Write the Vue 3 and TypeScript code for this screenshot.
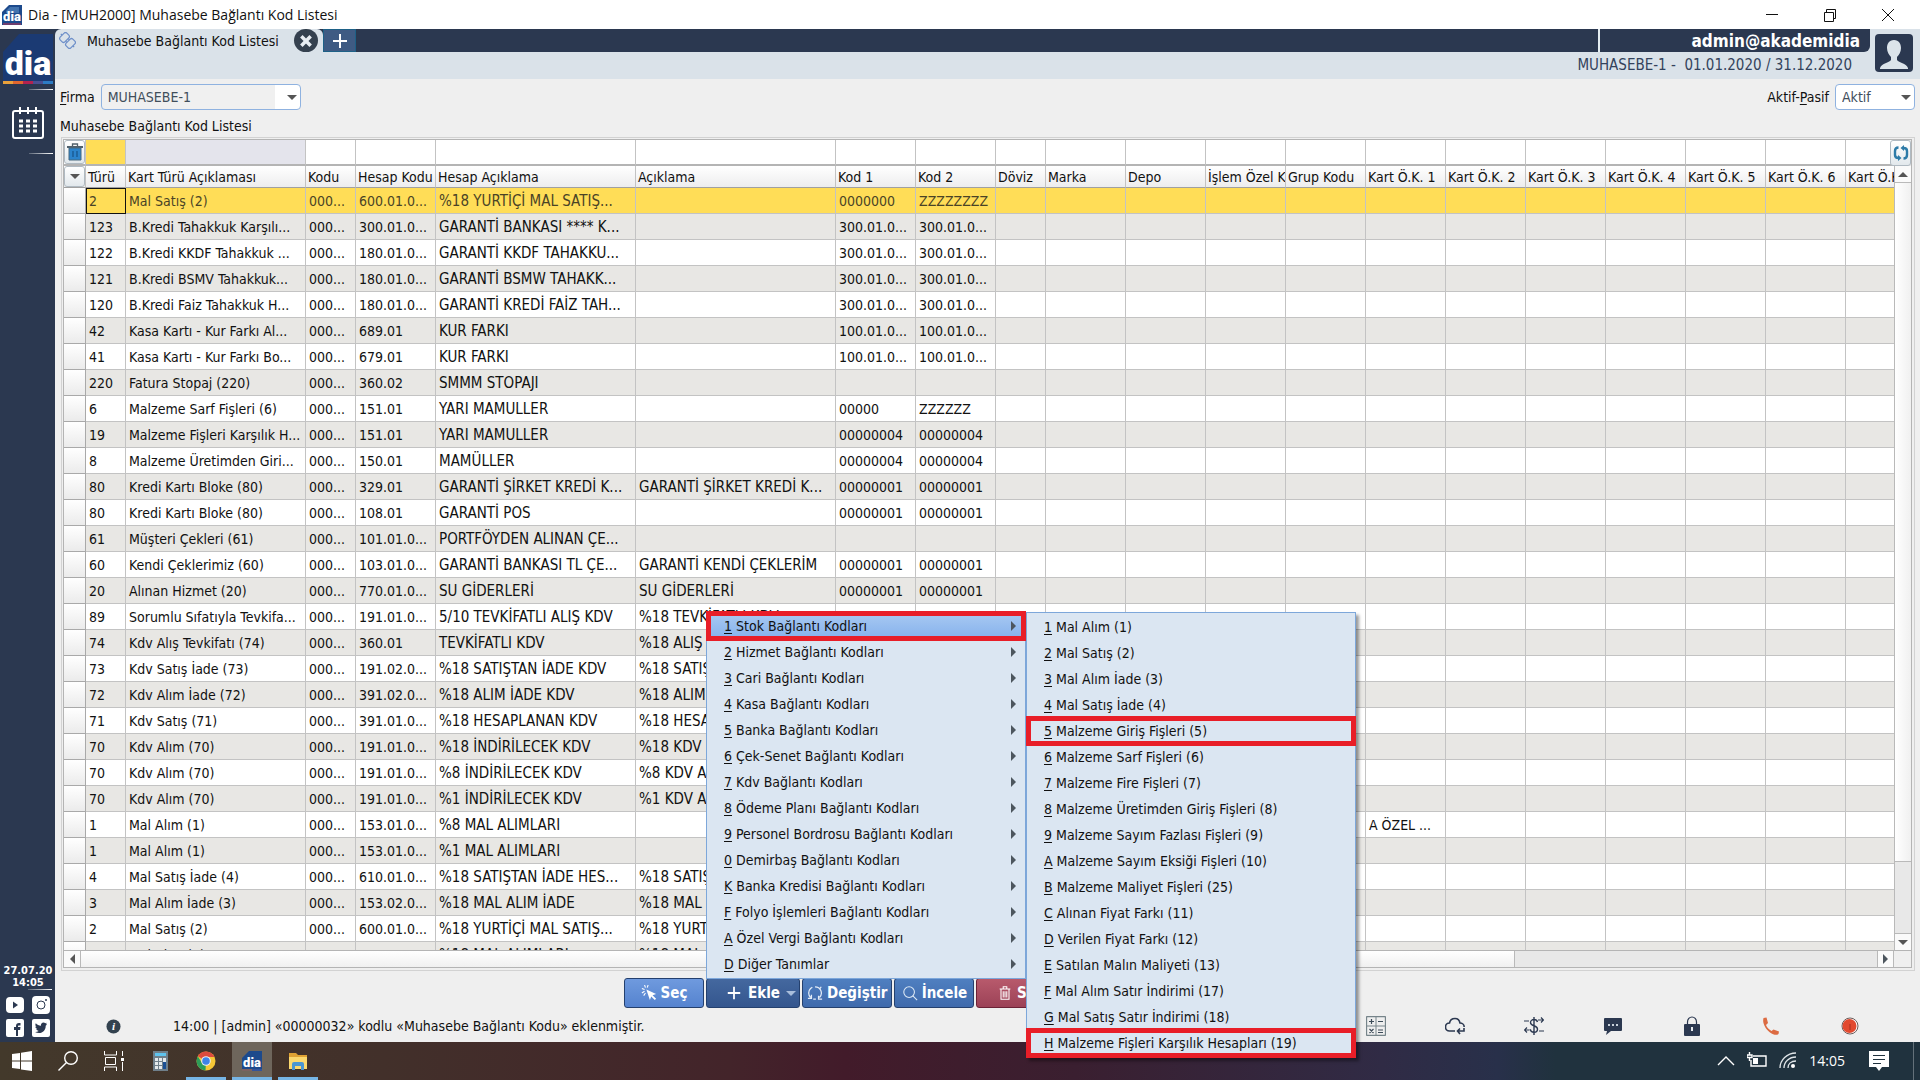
<script setup lang="ts">
import { ref } from 'vue'

interface Column {
  title: string
  width: number
}

interface MenuEntry {
  key: string
  label: string
  marked?: boolean
}

const columns: Column[] = [
  { title: 'Türü', width: 40 },
  { title: 'Kart Türü Açıklaması', width: 180 },
  { title: 'Kodu', width: 50 },
  { title: 'Hesap Kodu', width: 80 },
  { title: 'Hesap Açıklama', width: 200 },
  { title: 'Açıklama', width: 200 },
  { title: 'Kod 1', width: 80 },
  { title: 'Kod 2', width: 80 },
  { title: 'Döviz', width: 50 },
  { title: 'Marka', width: 80 },
  { title: 'Depo', width: 80 },
  { title: 'İşlem Özel Kod', width: 80 },
  { title: 'Grup Kodu', width: 80 },
  { title: 'Kart Ö.K. 1', width: 80 },
  { title: 'Kart Ö.K. 2', width: 80 },
  { title: 'Kart Ö.K. 3', width: 80 },
  { title: 'Kart Ö.K. 4', width: 80 },
  { title: 'Kart Ö.K. 5', width: 80 },
  { title: 'Kart Ö.K. 6', width: 80 },
  { title: 'Kart Ö.K. 7', width: 80 },
]

const records: string[][] = [
  ['2', 'Mal Satış (2)', '000...', '600.01.0...', '%18 YURTİÇİ MAL SATIŞ...', '', '0000000', 'ZZZZZZZZ'],
  ['123', 'B.Kredi Tahakkuk Karşılı...', '000...', '300.01.0...', 'GARANTİ BANKASI **** K...', '', '300.01.0...', '300.01.0...'],
  ['122', 'B.Kredi KKDF Tahakkuk ...', '000...', '180.01.0...', 'GARANTİ KKDF TAHAKKU...', '', '300.01.0...', '300.01.0...'],
  ['121', 'B.Kredi BSMV Tahakkuk...', '000...', '180.01.0...', 'GARANTİ BSMW TAHAKK...', '', '300.01.0...', '300.01.0...'],
  ['120', 'B.Kredi Faiz Tahakkuk H...', '000...', '180.01.0...', 'GARANTİ KREDİ FAİZ TAH...', '', '300.01.0...', '300.01.0...'],
  ['42', 'Kasa Kartı - Kur Farkı Al...', '000...', '689.01', 'KUR FARKI', '', '100.01.0...', '100.01.0...'],
  ['41', 'Kasa Kartı - Kur Farkı Bo...', '000...', '679.01', 'KUR FARKI', '', '100.01.0...', '100.01.0...'],
  ['220', 'Fatura Stopaj (220)', '000...', '360.02', 'SMMM STOPAJI'],
  ['6', 'Malzeme Sarf Fişleri (6)', '000...', '151.01', 'YARI MAMULLER', '', '00000', 'ZZZZZZ'],
  ['19', 'Malzeme Fişleri Karşılık H...', '000...', '151.01', 'YARI MAMULLER', '', '00000004', '00000004'],
  ['8', 'Malzeme Üretimden Giri...', '000...', '150.01', 'MAMÜLLER', '', '00000004', '00000004'],
  ['80', 'Kredi Kartı Bloke (80)', '000...', '329.01', 'GARANTİ ŞİRKET KREDİ K...', 'GARANTİ ŞİRKET KREDİ K...', '00000001', '00000001'],
  ['80', 'Kredi Kartı Bloke (80)', '000...', '108.01', 'GARANTİ POS', '', '00000001', '00000001'],
  ['61', 'Müşteri Çekleri (61)', '000...', '101.01.0...', 'PORTFÖYDEN ALINAN ÇE...'],
  ['60', 'Kendi Çeklerimiz (60)', '000...', '103.01.0...', 'GARANTİ BANKASI TL ÇE...', 'GARANTİ KENDİ ÇEKLERİM', '00000001', '00000001'],
  ['20', 'Alınan Hizmet (20)', '000...', '770.01.0...', 'SU GİDERLERİ', 'SU GİDERLERİ', '00000001', '00000001'],
  ['89', 'Sorumlu Sıfatıyla Tevkifa...', '000...', '191.01.0...', '5/10 TEVKİFATLI ALIŞ KDV', '%18 TEVKİFATLI KDV', '0000000', 'ZZZZZZZ'],
  ['74', 'Kdv Alış Tevkifatı (74)', '000...', '360.01', 'TEVKİFATLI KDV', '%18 ALIŞ'],
  ['73', 'Kdv Satış İade (73)', '000...', '191.02.0...', '%18 SATIŞTAN İADE KDV', '%18 SATIŞ'],
  ['72', 'Kdv Alım İade (72)', '000...', '391.02.0...', '%18 ALIM İADE KDV', '%18 ALIM'],
  ['71', 'Kdv Satış (71)', '000...', '391.01.0...', '%18 HESAPLANAN KDV', '%18 HESAP'],
  ['70', 'Kdv Alım (70)', '000...', '191.01.0...', '%18 İNDİRİLECEK KDV', '%18 KDV'],
  ['70', 'Kdv Alım (70)', '000...', '191.01.0...', '%8 İNDİRİLECEK KDV', '%8 KDV A'],
  ['70', 'Kdv Alım (70)', '000...', '191.01.0...', '%1 İNDİRİLECEK KDV', '%1 KDV A'],
  ['1', 'Mal Alım (1)', '000...', '153.01.0...', '%8 MAL ALIMLARI', '', '', '', '', '', '', '', '', 'A ÖZEL ...'],
  ['1', 'Mal Alım (1)', '000...', '153.01.0...', '%1 MAL ALIMLARI'],
  ['4', 'Mal Satış İade (4)', '000...', '610.01.0...', '%18 SATIŞTAN İADE HES...', '%18 SATIŞ'],
  ['3', 'Mal Alım İade (3)', '000...', '153.02.0...', '%18 MAL ALIM İADE', '%18 MAL'],
  ['2', 'Mal Satış (2)', '000...', '600.01.0...', '%18 YURTİÇİ MAL SATIŞ...', '%18 YURT'],
  ['1', 'Mal Alım (1)', '000...', '153.01.0...', '%18 MAL ALIMLARI', '%18 MAL'],
]

const linkGroups: MenuEntry[] = [
  { key: '1', label: 'Stok Bağlantı Kodları', marked: true },
  { key: '2', label: 'Hizmet Bağlantı Kodları' },
  { key: '3', label: 'Cari Bağlantı Kodları' },
  { key: '4', label: 'Kasa Bağlantı Kodları' },
  { key: '5', label: 'Banka Bağlantı Kodları' },
  { key: '6', label: 'Çek-Senet Bağlantı Kodları' },
  { key: '7', label: 'Kdv Bağlantı Kodları' },
  { key: '8', label: 'Ödeme Planı Bağlantı Kodları' },
  { key: '9', label: 'Personel Bordrosu Bağlantı Kodları' },
  { key: '0', label: 'Demirbaş Bağlantı Kodları' },
  { key: 'K', label: 'Banka Kredisi Bağlantı Kodları' },
  { key: 'F', label: 'Folyo İşlemleri Bağlantı Kodları' },
  { key: 'A', label: 'Özel Vergi Bağlantı Kodları' },
  { key: 'D', label: 'Diğer Tanımlar' },
]

const stockLinks: MenuEntry[] = [
  { key: '1', label: 'Mal Alım (1)' },
  { key: '2', label: 'Mal Satış (2)' },
  { key: '3', label: 'Mal Alım İade (3)' },
  { key: '4', label: 'Mal Satış İade (4)' },
  { key: '5', label: 'Malzeme Giriş Fişleri (5)', marked: true },
  { key: '6', label: 'Malzeme Sarf Fişleri (6)' },
  { key: '7', label: 'Malzeme Fire Fişleri (7)' },
  { key: '8', label: 'Malzeme Üretimden Giriş Fişleri (8)' },
  { key: '9', label: 'Malzeme Sayım Fazlası Fişleri (9)' },
  { key: 'A', label: 'Malzeme Sayım Eksiği Fişleri (10)' },
  { key: 'B', label: 'Malzeme Maliyet Fişleri (25)' },
  { key: 'C', label: 'Alınan Fiyat Farkı (11)' },
  { key: 'D', label: 'Verilen Fiyat Farkı (12)' },
  { key: 'E', label: 'Satılan Malın Maliyeti (13)' },
  { key: 'F', label: 'Mal Alım Satır İndirimi (17)' },
  { key: 'G', label: 'Mal Satış Satır İndirimi (18)' },
  { key: 'H', label: 'Malzeme Fişleri Karşılık Hesapları (19)', marked: true },
]

const selectedRow = ref(0)
const openGroup = ref('1')
const firm = ref('MUHASEBE-1')
const state = ref('Aktif')
</script>

<template>
  <div class="screen">
    <header class="titlebar">
      <svg class="app-icon" viewBox="0 0 20 20">
        <path d="M0 7 7 0h13v20H0z" fill="#1d4a8c" />
        <path d="M4 6 8 2h9v6H4z" fill="#5d8fc4" opacity=".6" />
        <text x="10" y="16" text-anchor="middle" class="logo-text" font-size="13">dia</text>
        <path d="M1 19h18" stroke="#c2314e" stroke-width="1" />
      </svg>
      <h1>Dia - [MUH2000] Muhasebe Bağlantı Kod Listesi</h1>
      <div class="window-controls">
        <button type="button" aria-label="Simge durumuna küçült">
          <svg viewBox="0 0 14 14"><path d="M1 6.500h12" /></svg>
        </button>
        <button type="button" aria-label="Önceki boyut">
          <svg viewBox="0 0 14 14"><path d="M1.500 4.500h9v9h-9zM3.500 4V1.500h9v9H11" /></svg>
        </button>
        <button type="button" aria-label="Kapat">
          <svg viewBox="0 0 14 14"><path d="m1 1 12 12M13 1 1 13" /></svg>
        </button>
      </div>
    </header>

    <div class="workspace">
      <aside class="sidebar">
        <svg class="brand" viewBox="0 0 50 50">
          <path d="M0 18 16 0h34v50H0z" fill="#1b3a73" />
          <text x="25" y="41" text-anchor="middle" class="logo-text" font-size="34">dia</text>
          <path d="M0 48.500h10" stroke="#e9a13b" stroke-width="3" />
          <path d="M10 48.500h10" stroke="#e0662f" stroke-width="3" />
          <path d="M20 48.500h10" stroke="#b3224f" stroke-width="3" />
          <path d="M30 48.500h10" stroke="#4a4f92" stroke-width="3" />
          <path d="M40 48.500h10" stroke="#2d7cc4" stroke-width="3" />
        </svg>
        <i class="rule"></i>
        <button type="button" class="calendar" aria-label="Takvim">
          <svg viewBox="0 0 32 32" fill="none" stroke="#fff" stroke-width="2">
            <rect x="1" y="4" width="30" height="27" rx="2" />
            <path d="M8 0v7M16 0v7M24 0v7" />
            <path d="M7 14h18M7 19h18M7 24h18" stroke-width="3" stroke-dasharray="4 3" />
          </svg>
        </button>
        <i class="rule"></i>
        <div class="clock">
          <span>27.07.20</span>
          <span>14:05</span>
          <i class="rule"></i>
        </div>
        <nav class="social" aria-label="Sosyal medya">
          <a href="#" aria-label="YouTube">
            <svg viewBox="0 0 18 18"><rect y="1" width="18" height="16" rx="4" fill="#fff" /><path d="M7 5.500v7l5-3.500z" fill="#2b3850" /></svg>
          </a>
          <a href="#" aria-label="Instagram">
            <svg viewBox="0 0 18 18"><rect width="18" height="18" rx="4" fill="#fff" /><circle cx="9" cy="9" r="4" fill="none" stroke="#2b3850" /><circle cx="14" cy="4" r="1" fill="#2b3850" /></svg>
          </a>
          <a href="#" aria-label="Facebook">
            <svg viewBox="0 0 18 18"><rect width="18" height="18" rx="2" fill="#fff" /><path d="M10 17v-6H8V8h2V7c0-2 1-3 3-3h1.500v2.500H13c-.7 0-1 .3-1 1V8h2.500l-.4 3H12v6z" fill="#2b3850" /></svg>
          </a>
          <a href="#" aria-label="Twitter">
            <svg viewBox="0 0 18 18"><rect width="18" height="18" rx="2" fill="#fff" /><path d="M15 5.500l-1.300 1.200c.2 4-2.700 7.300-6.700 7.300-1.500 0-2.800-.4-4-1.100 1.400.1 2.600-.3 3.600-1-1.100-.1-2-.8-2.300-1.800h1c-1.200-.4-2-1.300-2-2.500l1.100.3C3.400 7.100 3 5.500 3.800 4.300 5.100 5.800 6.900 6.700 9 6.800 8.600 5 9.900 3.500 11.500 3.500c.8 0 1.400.3 1.900.8l1.500-.5-.9 1.300z" fill="#2b3850" /></svg>
          </a>
        </nav>
      </aside>

      <main class="main">
        <div class="topbar">
          <div class="tabs">
            <div class="tab">
              <svg class="tab-icon" viewBox="0 0 18 18" fill="none" stroke="#6d8fc9" stroke-width="1.300">
                <g transform="rotate(45 9 9)">
                  <rect x="1" y="4" width="7" height="10" rx="2" /><rect x="10" y="4" width="7" height="10" rx="2" />
                  <path d="M-1 9h2M17 9h2M8 7h2M8 11h2" />
                </g>
              </svg>
              <span>Muhasebe Bağlantı Kod Listesi</span>
              <button type="button" class="tab-close" aria-label="Sekmeyi kapat">
                <svg viewBox="0 0 12 12"><path d="m2 2 8 8M10 2l-8 8" stroke="#e8edf2" stroke-width="3" /></svg>
              </button>
            </div>
            <button type="button" class="tab-add" aria-label="Yeni sekme">
              <svg viewBox="0 0 14 14"><path d="M7 0v14M0 7h14" stroke="#fff" stroke-width="2" /></svg>
            </button>
            <div class="filler"></div>
            <strong class="user">admin@akademidia</strong>
          </div>
          <div class="period">MUHASEBE-1 -&nbsp; 01.01.2020 / 31.12.2020</div>
          <svg class="avatar" viewBox="0 0 38 38">
            <rect width="38" height="38" rx="4" fill="#2b3850" />
            <path d="M19 6c5 0 7 4 7 8s-2 7-4 9v3c2 3 9 3 11 8v1H5v-1c2-5 9-5 11-8v-3c-2-2-4-5-4-9s2-8 7-8z" fill="#dce4ea" />
          </svg>
        </div>

        <div class="filters">
          <label for="firm"><u>F</u>irma</label>
          <div class="select firm">
            <select id="firm" v-model="firm"><option>MUHASEBE-1</option></select>
          </div>
          <div class="filler"></div>
          <label for="state">Aktif-<u>P</u>asif</label>
          <div class="select state">
            <select id="state" v-model="state"><option>Aktif</option><option>Pasif</option></select>
          </div>
        </div>

        <h2>Muhasebe Bağlantı Kod Listesi</h2>

        <section class="frame">
          <div class="grid">
            <div class="grid-body">
              <div class="viewport">
                <table>
                  <colgroup>
                    <col class="col-handle" />
                    <col v-for="column in columns" :key="column.title" :style="{ width: column.width + 'px' }" />
                  </colgroup>
                  <thead>
                    <tr class="filter-row">
                      <td class="tool-cell">
                        <button type="button" class="tool" aria-label="Filtreleri temizle">
                          <svg viewBox="0 0 16 18">
                            <path d="M5.500 3V1h5v2" fill="none" stroke="#51616c" stroke-width="1.300" />
                            <path d="M0 3h16v2H0z" fill="#51616c" />
                            <path d="M2 5h12v12H2z" fill="#2b83cc" stroke="#47697f" />
                            <path d="M6 8v6M10 8v6" stroke="#19568e" stroke-width="1.300" />
                          </svg>
                        </button>
                      </td>
                      <td v-for="column in columns" :key="column.title">
                        <input type="text" :aria-label="column.title + ' filtresi'" />
                      </td>
                    </tr>
                    <tr class="head-row">
                      <th class="tool-cell">
                        <button type="button" class="tool" aria-label="Sütun seçimi"><i class="arrow down"></i></button>
                      </th>
                      <th v-for="column in columns" :key="column.title" scope="col">{{ column.title }}</th>
                    </tr>
                  </thead>
                  <tbody>
                    <tr
                      v-for="(record, index) in records"
                      :key="index"
                      :class="{ selected: index === selectedRow }"
                      @click="selectedRow = index"
                    >
                      <td class="handle"></td>
                      <td
                        v-for="(column, cell) in columns"
                        :key="column.title"
                        :class="{ description: cell === 4 || cell === 5 }"
                      >{{ record[cell] }}</td>
                    </tr>
                  </tbody>
                </table>
              </div>
              <div class="vscroll">
                <button type="button" class="tool refresh" aria-label="Yenile">
                  <svg viewBox="0 0 16 16" fill="none" stroke="#2d7ba8" stroke-width="2.400">
                    <path d="M5.500 2.500C3 2.500 2 4 2 6v4c0 2 1 3 3.500 3M10.500 13.500c2.500 0 3.500-1.500 3.500-3.500V6c0-2-1-3-3.500-3" />
                    <path d="M11 0v6L7.500 3zM5 10v6l3.500-3z" fill="#2d7ba8" stroke="none" />
                  </svg>
                </button>
                <button type="button" class="step" aria-label="Yukarı"><i class="arrow up"></i></button>
                <div class="thumb"></div>
                <div class="track"></div>
                <button type="button" class="step last" aria-label="Aşağı"><i class="arrow down"></i></button>
              </div>
            </div>
            <div class="hscroll">
              <button type="button" class="step" aria-label="Sola"><i class="arrow left"></i></button>
              <div class="thumb"></div>
              <div class="track"></div>
              <button type="button" class="step last" aria-label="Sağa"><i class="arrow right"></i></button>
              <i class="corner"></i>
            </div>
          </div>
        </section>

        <div class="actions">
          <button type="button" class="action light wide">
            <svg viewBox="0 0 18 18"><path d="m6 5 11 5-4 1.500 4 4L15.500 17l-4-4L10 17z" fill="#fff" /><path d="M4 5 1 4M5 3 4 0M7 3l1-3M4 7 1 9M3 12l2-3" stroke="#fff" stroke-width="1.200" /></svg>
            <span>Seç</span>
          </button>
          <div class="add-wrap">
            <button type="button" class="action dark" aria-haspopup="menu" aria-expanded="true">
              <svg viewBox="0 0 18 18"><path d="M9 2v14M2 9h14" stroke="#fff" stroke-width="2" /></svg>
              <span>Ekle</span>
              <i class="arrow down pale"></i>
            </button>
            <ul class="menu" role="menu">
              <li v-for="entry in linkGroups" :key="entry.key" :class="{ marked: entry.marked }">
                <button
                  type="button"
                  role="menuitem"
                  :class="{ open: entry.key === openGroup }"
                  @click="openGroup = entry.key"
                >
                  <span><u>{{ entry.key }}</u> {{ entry.label }}</span>
                  <i class="arrow right"></i>
                </button>
              </li>
            </ul>
            <ul class="menu submenu" role="menu">
              <li v-for="entry in stockLinks" :key="entry.key" :class="{ marked: entry.marked }">
                <button type="button" role="menuitem"><span><u>{{ entry.key }}</u> {{ entry.label }}</span></button>
              </li>
            </ul>
          </div>
          <button type="button" class="action">
            <svg viewBox="0 0 18 18" fill="none" stroke="#e3ecf7" stroke-width="1.400">
              <path d="M4 14a7 7 0 0 1 0-10l2-1.500M9 2a7 7 0 0 1 5 12M1 15h4v-4M17 16h-4v-4M7 16h3M14 5l2-3" />
            </svg>
            <span>Değiştir</span>
          </button>
          <button type="button" class="action wide">
            <svg viewBox="0 0 18 18" fill="none" stroke="#dce8f5" stroke-width="1.200"><circle cx="8" cy="8" r="6" /><path d="m12 12 5 5" /></svg>
            <span>İncele</span>
          </button>
          <button type="button" class="action red wide">
            <svg viewBox="0 0 18 18" fill="none" stroke="#fff" stroke-width="1.200"><path d="M3 4.500h12M7 4V2h4v2M4.500 5v11h9V5M7 7v7M9 7v7M11 7v7" /></svg>
            <span>Sil</span>
          </button>
        </div>

        <footer class="status">
          <svg class="info" viewBox="0 0 16 16"><circle cx="8" cy="8" r="7.500" fill="#33424f" /><text x="8" y="12" text-anchor="middle" class="info-text">i</text></svg>
          <p>14:00 | [admin] «00000032» kodlu «Muhasebe Bağlantı Kodu» eklenmiştir.</p>
          <div class="filler"></div>
          <div class="status-icons">
            <button type="button" aria-label="Hesap makinesi">
              <svg viewBox="0 0 20 20" fill="none" stroke="#76848a"><rect x=".5" y=".5" width="19" height="19" rx="1" stroke-width="1.300" /><path d="M10 0v20M0 10h20" /><path d="M3 5.500h5M5.500 3v5M12 5.500h5M3.500 13l4 4M7.500 13l-4 4M12 14h5M12 16.500h5" stroke="#3c4b58" stroke-width="1.200" /></svg>
            </button>
            <button type="button" aria-label="Bulut">
              <svg viewBox="0 0 20 20" fill="none" stroke="#2b3850" stroke-width="1.600"><path d="M10 15H4.500a4 4 0 0 1 0-8C5 4 7.500 2.500 10 2.500s4.500 1.800 5 4.500c2 0 4.200 1.500 4.200 4" /><path d="M19 12v3h-6M15 12.500 12.500 15l2.500 3" /></svg>
            </button>
            <button type="button" aria-label="Döviz">
              <svg viewBox="0 0 20 20" fill="none" stroke="#2b3850" stroke-width="1.400"><path d="M13.500 6c-.5-2-2-2.500-3.500-2.500C8 3.500 6.500 5 6.500 6.500 6.500 10.500 13.500 9 13.500 13c0 2-1.700 3.300-3.500 3.300-2 0-3.500-1-3.700-3M10 1v18" /><path d="M0 5h5M14 4h5.500M17 1.500 19.500 4 17 6.500M5.500 14H.5M3 11.500.5 14 3 16.500M15 15h5" stroke-width="1.200" /></svg>
            </button>
            <button type="button" aria-label="Mesajlar">
              <svg viewBox="0 0 20 20"><path d="M2 2h16a1 1 0 0 1 1 1v11a1 1 0 0 1-1 1H8l-5 4 1-4H2a1 1 0 0 1-1-1V3a1 1 0 0 1 1-1z" fill="#2b3850" /><path d="M5 9h2M9 9h2M13 9h2" stroke="#c9d2dc" stroke-width="2" /></svg>
            </button>
            <button type="button" aria-label="Kilit">
              <svg viewBox="0 0 20 20"><path d="M5.500 8V6a4.500 5 0 0 1 9 0v2" fill="none" stroke="#2b3850" stroke-width="1.200" /><rect x="2" y="8" width="16" height="12" rx="1" fill="#2b3850" /><path d="M10 11v4" stroke="#e6ebf0" stroke-width="2" /></svg>
            </button>
            <button type="button" aria-label="Telefon">
              <svg viewBox="0 0 20 20"><path d="M2.500 2 5.500 1.500 7 7 5 9c1.200 2.800 3 4.600 5.500 6l2-1.500 5.500 2-.5 2.500c-2 1.500-5 1-8.500-1.500C4.500 13 1 7 2.500 2z" fill="#dc6b42" /></svg>
            </button>
            <button type="button" aria-label="Kayıt">
              <svg viewBox="0 0 20 20"><circle cx="10" cy="10" r="8" fill="#fff" stroke="#6a5a58" /><circle cx="9.500" cy="10" r="7" fill="#e2492f" /><path d="M10 8v6" stroke="#a82f20" /></svg>
            </button>
          </div>
        </footer>
      </main>
    </div>

    <div class="taskbar">
      <button type="button" class="task" aria-label="Başlat">
        <svg viewBox="0 0 20 20"><path d="m0 3 8-1.100v7.600H0zM9 1.700 20 0v9.500H9zM0 10.500h8v7.600L0 17zM9 10.500h11V20L9 18.400z" fill="#fff" /></svg>
      </button>
      <button type="button" class="task" aria-label="Ara">
        <svg viewBox="0 0 20 20" fill="none" stroke="#fff" stroke-width="1.400"><circle cx="13" cy="7" r="6.300" /><path d="M8.500 11.500.5 19.500" /></svg>
      </button>
      <button type="button" class="task" aria-label="Görev görünümü">
        <svg viewBox="0 0 20 20" fill="none" stroke="#fff"><path d="M.5 0v4h12V0M.5 20v-4h12v4M1.500 6.500h10v7h-10zM18.500 0v5M18.500 11v9" /><path d="M17 8.500h3" stroke-width="3" /></svg>
      </button>
      <button type="button" class="task" aria-label="Hesap Makinesi">
        <svg viewBox="0 0 20 20"><path d="M3 0h15v20H3z" fill="#6f7f8a" /><path d="M5 2h11v3H5z" fill="#5fc4ee" /><path d="M5 8.500h7M5 12.500h7M5 16.500h7" stroke="#e4e9ec" stroke-width="3" stroke-dasharray="3 1" /><path d="M13 7h3v4h-3z" fill="#e4e9ec" /><path d="M13 11h3v7h-3z" fill="#1a4f94" /></svg>
      </button>
      <button type="button" class="task running" aria-label="Chrome">
        <svg viewBox="0 0 20 20"><circle cx="10" cy="10" r="9.500" fill="#f6c736" /><path d="M10 10 1.800 5.200A9.500 9.500 0 0 1 18.500 6H10z" fill="#dd4b3e" /><path d="M10 10 9.500 19.500A9.500 9.500 0 0 1 1.800 5.200L6 12z" fill="#2d9d58" /><circle cx="10" cy="10" r="4.800" fill="#eef1f4" /><circle cx="10" cy="10" r="3.800" fill="#3f83e8" /></svg>
      </button>
      <button type="button" class="task running active" aria-label="Dia">
        <svg viewBox="0 0 20 20"><path d="M0 7 7 0h13v20H0z" fill="#1d4a8c" /><text x="10" y="16" text-anchor="middle" class="logo-text" font-size="13">dia</text><path d="M0 19h10" stroke="#dc7a35" /><path d="M10 19h10" stroke="#4c5fa8" /></svg>
      </button>
      <button type="button" class="task running" aria-label="Dosya Gezgini">
        <svg viewBox="0 0 20 20"><path d="M1 2h7l2 2h9v14H1z" fill="#dfa234" /><path d="M1 6h18v12H1z" fill="#fbd86e" /><path d="M4 19v-6a2 2 0 0 1 2-2h8a2 2 0 0 1 2 2v6h-3v-4H7v4z" fill="#4a96d2" /></svg>
      </button>
      <div class="filler"></div>
      <div class="tray">
        <svg viewBox="0 0 20 20" fill="none" stroke="#fff" stroke-width="1.400"><path d="m2 14 8-8 8 8" /></svg>
        <svg viewBox="0 0 20 20" fill="none" stroke="#fff" stroke-width="1.400"><path d="M6 5h13v10H4V9" /><path d="M6 7h5v6H6z" fill="#fff" stroke="none" /><path d="M2.500 1v3M0 4h5v2.500H0zM2.500 6v4" /></svg>
        <svg viewBox="0 0 20 20" fill="none" stroke="#dfe5e8" stroke-width="1.300"><path d="M2 17C2 9 9 2 18 2M6 17C6 11 11 6 18 6M10 17c0-4 3-7 8-7" /><circle cx="15" cy="15" r="2" fill="#fff" stroke="none" /></svg>
        <time>14:05</time>
        <svg class="notice" viewBox="0 0 20 20"><path d="M0 0h20v16h-7l-3 4-3-4H0z" fill="#fff" /><path d="M4 4.500h12M4 8.500h12M4 12.500h8" stroke="#20323e" stroke-width="1.200" /></svg>
      </div>
      <button type="button" class="show-desktop" aria-label="Masaüstünü göster"></button>
    </div>
  </div>
</template>

<style>
body {
  margin: 0;
  background: #efefef;
}
</style>

<style scoped>
.screen {
  display: flex;
  flex-direction: column;
  height: 100vh;
  overflow: hidden;
  color: #111;
  font: 14px/18px 'DejaVu Sans Condensed', 'Noto Sans', sans-serif;
}
.screen * {
  box-sizing: border-box;
}
button {
  padding: 0;
  border: 0;
  background: none;
  color: inherit;
  font: inherit;
}
svg {
  display: block;
  flex: none;
}
ul,
p,
h1,
h2 {
  margin: 0;
  padding: 0;
  font: inherit;
  list-style: none;
}
u {
  text-underline-offset: 2px;
}
.filler {
  flex: 1;
}
.logo-text {
  fill: #fff;
  font-family: Roboto, sans-serif;
  font-weight: 900;
}

/* Window title */
.titlebar {
  display: flex;
  align-items: center;
  height: 29px;
  padding-left: 2px;
  background: #fff;
}
.app-icon {
  width: 20px;
  height: 20px;
  margin-right: 6px;
}
.titlebar h1 {
  flex: 1;
  font: 14px/18px 'Open Sans', 'Noto Sans', sans-serif;
}
.window-controls button {
  width: 58px;
  height: 29px;
}
.window-controls svg {
  width: 14px;
  height: 14px;
  margin: 0 auto;
  fill: none;
  stroke: #111;
}
.window-controls {
  display: flex;
  padding-right: 3px;
}

/* Sidebar */
.workspace {
  display: flex;
  flex: 1;
  min-height: 0;
}
.sidebar {
  display: flex;
  flex-direction: column;
  align-items: center;
  width: 55px;
  padding: 5px 2px 5px 3px;
  background: #2b3850;
}
.brand {
  width: 50px;
  height: 50px;
}
.rule {
  align-self: flex-end;
  width: 24px;
  height: 1px;
  background: linear-gradient(90deg, #5d6879, #fff);
}
.sidebar > .rule {
  margin-top: 5px;
}
.calendar {
  width: 32px;
  margin: 17px 0 9px;
}
.clock {
  display: flex;
  flex-direction: column;
  margin-top: auto;
  color: #fff;
  font: bold 11px/12px 'DejaVu Sans Condensed', sans-serif;
  text-align: center;
}
.social {
  display: grid;
  grid-template-columns: 18px 18px;
  gap: 5px 8px;
  margin-top: 6px;
}

/* Top strip with tabs and account */
.main {
  display: flex;
  flex: 1;
  flex-direction: column;
  min-width: 0;
}
.topbar {
  position: relative;
  height: 50px;
  padding-right: 50px;
  background: #dae2e9;
}
.tabs {
  display: flex;
  height: 23px;
  overflow: hidden;
  border-radius: 0 0 6px 0;
  background: #2b3850;
}
.tab {
  display: flex;
  align-items: center;
  width: 268px;
  padding: 0 5px 0 4px;
  border-radius: 6px 6px 0 0;
  background: #dae2e9;
}
.tab span {
  flex: 1;
  margin-left: 11px;
}
.tab-icon {
  width: 17px;
}
.tab-close {
  display: flex;
  align-items: center;
  justify-content: center;
  width: 24px;
  height: 23px;
  border-radius: 12px;
  background: #35414f;
}
.tab-close svg {
  width: 14px;
}
.tab-add {
  display: flex;
  align-items: center;
  justify-content: center;
  width: 33px;
  border: 1px solid #1e6187;
  background: #3f5b83;
}
.tab-add svg {
  width: 14px;
}
.user {
  width: 272px;
  padding-right: 10px;
  border-left: 2px solid #e4edf1;
  color: #fff;
  font-size: 17px;
  line-height: 24px;
  text-align: right;
}
.period {
  padding-right: 18px;
  color: #33425c;
  font-size: 15px;
  line-height: 26px;
  text-align: right;
}
.avatar {
  position: absolute;
  top: 5px;
  right: 7px;
  width: 38px;
}

/* Filter bar */
.filters {
  display: flex;
  align-items: center;
  gap: 6px;
  padding: 5px 5px 0;
}
.select {
  position: relative;
  height: 26px;
}
.select.firm {
  width: 200px;
}
.select.state {
  width: 80px;
}
.select select {
  width: 100%;
  height: 26px;
  padding: 0 6px;
  border: 1px solid #8fb2e0;
  border-radius: 4px;
  appearance: none;
  background: #fff;
  color: #414e5b;
  font: inherit;
}
.select.firm select {
  background: linear-gradient(90deg, #f0f0f0 173px, #fff 173px);
}
.select::after {
  position: absolute;
  top: 11px;
  right: 4px;
  border: 5px solid transparent;
  border-top-color: #555;
  border-bottom: 0;
  content: '';
  pointer-events: none;
}
.main h2 {
  padding: 7px 5px 2px;
}

/* Data grid */
.frame {
  display: flex;
  flex: 1;
  min-height: 0;
  margin: 0 5px 7px 6px;
  padding: 1px 2px 2px 1px;
  border: 1px solid #d2d2d2;
}
.grid {
  display: flex;
  flex: 1;
  flex-direction: column;
  min-width: 0;
  border: 1px solid #b4b4b4;
}
.grid-body {
  display: flex;
  flex: 1;
  min-height: 0;
}
.viewport {
  flex: 1;
  overflow: hidden;
  background: #fff;
}
table {
  width: 1862px;
  border-spacing: 0;
  table-layout: fixed;
}
.col-handle {
  width: 22px;
}
td,
th {
  overflow: hidden;
  padding: 0 0 0 3px;
  border-right: 1px solid #c3c3c3;
  font-weight: normal;
  text-align: left;
  white-space: nowrap;
}
tbody td {
  height: 26px;
  border-bottom: 1px solid #c3c3c3;
}
tbody .description {
  font-size: 15px;
}
tbody tr:nth-child(even) {
  background: #e8e7e4;
}
tbody tr.selected {
  background: #ffdd57;
  color: #4a4326;
}
tbody .handle {
  border-color: #a9a9a9;
  background: linear-gradient(#fff, #ebebeb);
}
.selected td:nth-child(2) {
  outline: 1px solid #111;
  outline-offset: -1px;
}
.filter-row td {
  height: 26px;
  padding: 0;
  border-bottom: 2px solid #b4b4b4;
}
.filter-row input {
  display: block;
  width: 100%;
  height: 24px;
  padding: 0 3px;
  border: 0;
  background: #fff;
  font: inherit;
}
.filter-row td:nth-child(2) input {
  background: #ffdd57;
}
.filter-row td:nth-child(3) input {
  background: #e4e4ec;
}
.head-row th {
  height: 22px;
  padding-left: 2px;
  border-bottom: 1px solid #a0a0a0;
  background: linear-gradient(#fff, #ededee);
}
.head-row .tool-cell,
.filter-row .tool-cell {
  padding: 0;
}
.tool {
  display: flex;
  align-items: center;
  justify-content: center;
  width: 100%;
  height: 24px;
  border: 1px solid #b0bac2;
  border-radius: 3px;
  background: linear-gradient(#fff, #e2e8ec);
}
.tool svg {
  width: 16px;
}
.head-row .tool {
  height: 21px;
}

/* Small triangles on buttons, menus and scroll bars */
.arrow {
  border: 5px solid transparent;
}
.arrow.down {
  border-top-color: #555;
  border-bottom: 0;
}
.arrow.up {
  border-top: 0;
  border-bottom-color: #555;
}
.arrow.left {
  border-right-color: #555;
  border-left: 0;
}
.arrow.right {
  border-right: 0;
  border-left-color: #4d565e;
}
.arrow.pale {
  border-top-color: #a9bedb;
}

/* Scroll bars */
.vscroll {
  display: flex;
  flex-direction: column;
  align-items: flex-end;
  width: 17px;
  background: #e8e8e8;
}
.vscroll > * {
  width: 17px;
  border-left: 1px solid #b9b9b9;
}
.vscroll .refresh {
  position: relative;
  width: 21px;
  height: 26px;
  border: 1px solid #b0bac2;
}
.step {
  display: flex;
  flex: none;
  align-items: center;
  justify-content: center;
  width: 17px;
  height: 17px;
  background: #fafafa;
}
.vscroll .step {
  border-bottom: 1px solid #b9b9b9;
}
.vscroll .step.last {
  border-top: 1px solid #b9b9b9;
  border-bottom: 0;
}
.vscroll .thumb {
  flex: 680;
  border-bottom: 1px solid #b9b9b9;
  background: linear-gradient(90deg, #fff, #f0f0f0);
}
.vscroll .track {
  flex: 71;
}
.hscroll {
  display: flex;
  height: 17px;
  border-top: 1px solid #b4b4b4;
  background: #e8e8e8;
}
.hscroll .step {
  height: 16px;
  border-right: 1px solid #b9b9b9;
}
.hscroll .thumb {
  flex: 1433;
  border-right: 1px solid #b9b9b9;
  background: linear-gradient(#fff, #f0f0f0);
}
.hscroll .track {
  flex: 362;
}
.hscroll .step.last {
  border-left: 1px solid #b9b9b9;
}
.corner {
  width: 17px;
  background: #efefef;
}

/* Action buttons */
.actions {
  display: flex;
  gap: 2px;
  padding-left: 569px;
}
.action {
  display: flex;
  align-items: center;
  justify-content: center;
  gap: 4px;
  height: 30px;
  padding: 0 4px;
  border: 1px solid #24406e;
  border-radius: 3px;
  background: linear-gradient(#4f7fc0, #3f6aac);
  color: #fff;
  font-size: 15px;
  font-weight: bold;
}
.action svg {
  width: 16px;
}
.action.wide {
  width: 80px;
}
.action.light {
  background: linear-gradient(#6f9ade, #5583cf);
}
.action.dark {
  gap: 6px;
  width: 94px;
  padding-left: 20px;
  background: linear-gradient(#44689f, #34568e);
}
.action.red {
  border-color: #6c2236;
  background: linear-gradient(#b85a6c, #9c4257);
}
.add-wrap {
  position: relative;
}

/* Drop-down menus */
.menu {
  position: absolute;
  bottom: 29px;
  left: 0;
  z-index: 5;
  width: 320px;
  padding: 1px;
  border: 1px solid #7da7da;
  background: #dbe6f2;
}
.submenu {
  bottom: -50px;
  left: 320px;
  width: 330px;
  box-shadow: 3px 3px 3px #0006;
}
.menu li {
  position: relative;
}
.menu li.marked::after {
  position: absolute;
  inset: -2px;
  z-index: 1;
  border: 5px solid #e81e28;
  content: '';
  pointer-events: none;
}
.menu button {
  display: flex;
  align-items: center;
  justify-content: space-between;
  width: 100%;
  height: 26px;
  padding: 0 8px 0 16px;
}
.menu button.open {
  background: linear-gradient(#a8c9f2, #85b1ec);
}

/* Status line */
.status {
  display: flex;
  align-items: center;
  height: 34px;
  padding: 2px 31px 0 51px;
}
.info {
  width: 15px;
}
.info-text {
  fill: #fff;
  font: italic bold 12px 'Liberation Serif', serif;
}
.status p {
  margin-left: 52px;
}
.status-icons {
  display: flex;
}
.status-icons button {
  width: 79px;
}
.status-icons svg {
  width: 20px;
  margin: 0 auto;
}

/* Desktop taskbar */
.taskbar {
  display: flex;
  gap: 6px;
  height: 38px;
  padding-left: 2px;
  background: linear-gradient(90deg, #43392b 0%, #42302a 20%, #43242a 38%, #421b2a 44%, #3a1f30 56%, #302b45 72%, #28304a 78%, #20323e 81%);
}
.task {
  width: 40px;
}
.task svg {
  width: 20px;
  margin: 0 auto;
}
.task.running {
  padding-top: 3px;
  border-bottom: 3px solid #76b5e5;
}
.task.active {
  background: #6e665c;
}
.tray {
  display: flex;
  align-items: center;
  gap: 11px;
  padding-right: 18px;
  color: #fff;
  font: 14px/20px 'Open Sans', 'Noto Sans', sans-serif;
}
.tray svg {
  width: 20px;
}
.tray .notice {
  margin-left: 13px;
}
.show-desktop {
  width: 7px;
  border-left: 1px solid #64717a;
}
</style>
